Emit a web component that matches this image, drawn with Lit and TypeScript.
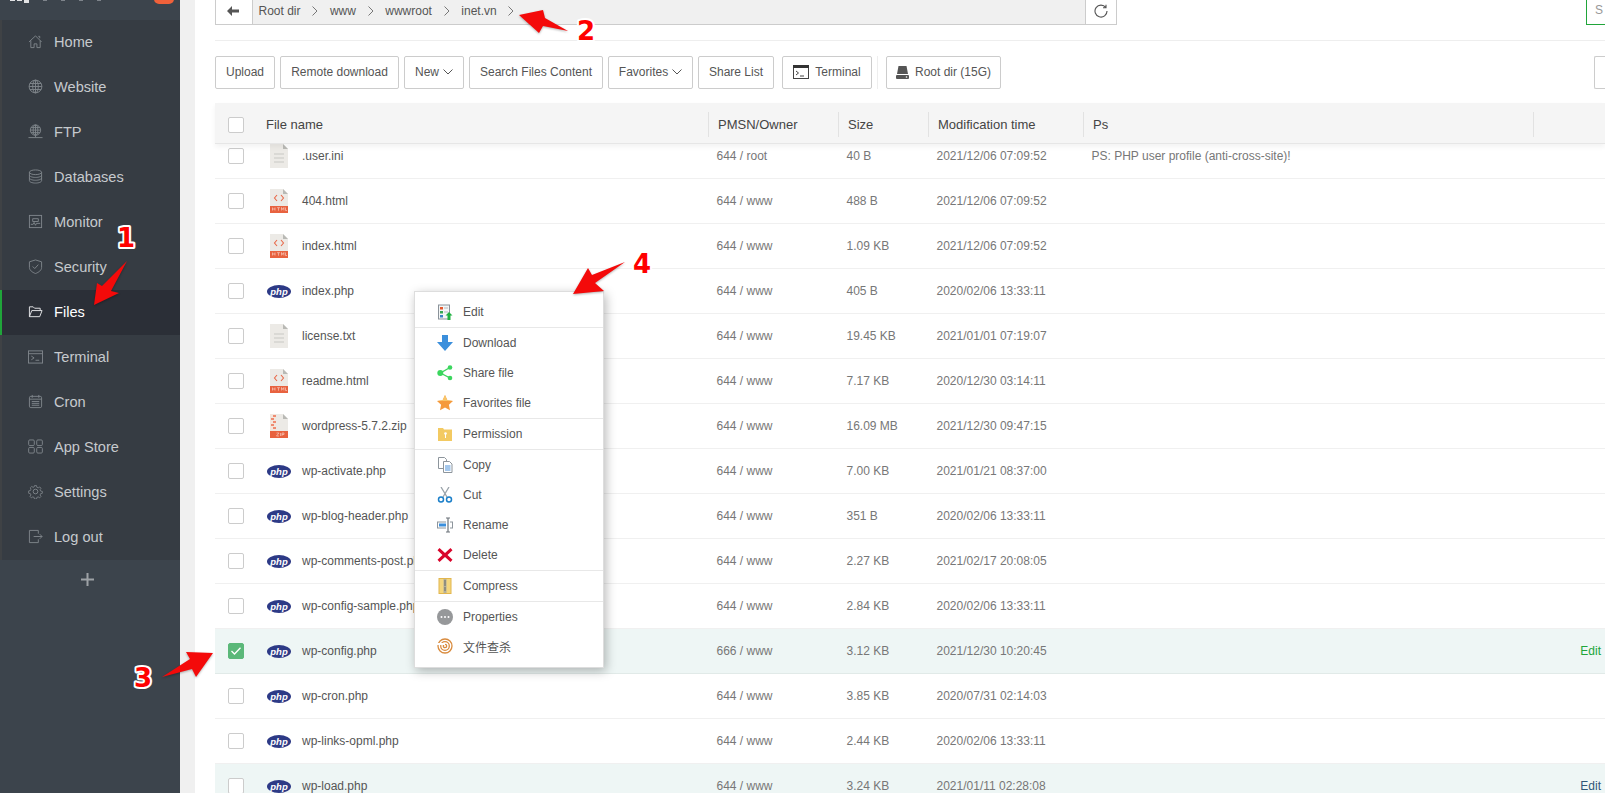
import { LitElement, html, css, svg } from 'lit';
import { customElement } from 'lit/decorators.js';
import { classMap } from 'lit/directives/class-map.js';

type Kind = 'txt' | 'html' | 'php' | 'zip';

interface FileRow {
  name: string;
  kind: Kind;
  perm: string;
  size: string;
  time: string;
  ps?: string;
  checked?: boolean;
  tint?: boolean;
  edit?: 'green' | 'blue';
}

const W = '644 / www';

const FILES: FileRow[] = [
  { name: '.user.ini', kind: 'txt', perm: '644 / root', size: '40 B', time: '2021/12/06 07:09:52', ps: 'PS: PHP user profile (anti-cross-site)!' },
  { name: '404.html', kind: 'html', perm: W, size: '488 B', time: '2021/12/06 07:09:52' },
  { name: 'index.html', kind: 'html', perm: W, size: '1.09 KB', time: '2021/12/06 07:09:52' },
  { name: 'index.php', kind: 'php', perm: W, size: '405 B', time: '2020/02/06 13:33:11' },
  { name: 'license.txt', kind: 'txt', perm: W, size: '19.45 KB', time: '2021/01/01 07:19:07' },
  { name: 'readme.html', kind: 'html', perm: W, size: '7.17 KB', time: '2020/12/30 03:14:11' },
  { name: 'wordpress-5.7.2.zip', kind: 'zip', perm: W, size: '16.09 MB', time: '2021/12/30 09:47:15' },
  { name: 'wp-activate.php', kind: 'php', perm: W, size: '7.00 KB', time: '2021/01/21 08:37:00' },
  { name: 'wp-blog-header.php', kind: 'php', perm: W, size: '351 B', time: '2020/02/06 13:33:11' },
  { name: 'wp-comments-post.php', kind: 'php', perm: W, size: '2.27 KB', time: '2021/02/17 20:08:05' },
  { name: 'wp-config-sample.php', kind: 'php', perm: W, size: '2.84 KB', time: '2020/02/06 13:33:11' },
  { name: 'wp-config.php', kind: 'php', perm: '666 / www', size: '3.12 KB', time: '2021/12/30 10:20:45', checked: true, tint: true, edit: 'green' },
  { name: 'wp-cron.php', kind: 'php', perm: W, size: '3.85 KB', time: '2020/07/31 02:14:03' },
  { name: 'wp-links-opml.php', kind: 'php', perm: W, size: '2.44 KB', time: '2020/02/06 13:33:11' },
  { name: 'wp-load.php', kind: 'php', perm: W, size: '3.24 KB', time: '2021/01/11 02:28:08', tint: true, edit: 'blue' },
];

// sidebar icons, 16x16 outline
const NAV_ICONS: Record<string, unknown> = {
  home: svg`<path d="M1 8.500 8 2l6.500 6.500M3 7v7.500h3.500V10.500h3V14.500H13V7M11 2.500h1.500V4.500"/>`,
  web: svg`<circle cx="8" cy="8" r="6.800"/><ellipse cx="8" cy="8" rx="3" ry="6.800"/><path d="M8 1.200v13.600M1.200 8h13.600M2 4.800h12M2 11.200h12"/>`,
  ftp: svg`<circle cx="8" cy="6.500" r="5.500"/><ellipse cx="8" cy="6.500" rx="2.500" ry="5.500"/><path d="M8 1v11M2.500 6.500h11M3.300 3.800h9.400M3.300 9.200h9.400M8 12v2M.5 14.500h15"/>`,
  db: svg`<ellipse cx="8" cy="3.500" rx="6.500" ry="2.500"/><path d="M1.500 3.500v9c0 1.400 2.900 2.500 6.500 2.500s6.500-1.100 6.500-2.500v-9M1.500 6.500C1.500 7.900 4.400 9 8 9s6.500-1.100 6.500-2.500M1.500 9.500c0 1.400 2.900 2.500 6.500 2.500s6.500-1.100 6.500-2.500"/>`,
  monitor: svg`<rect x="1.500" y="1.500" width="13" height="13"/><path d="M3 11h2.500l1-2 1.500 3 1-2H13M5 5h6v3H5z"/>`,
  shield: svg`<path d="M8 1 14.500 3v6c0 3-3 5.200-6.500 6.500C4.500 14.200 1.500 12 1.500 9V3zM5 8l2.200 2.200L11 6"/>`,
  files: svg`<path d="M1.500 13.500V3h4l1.500 1.500h6V7M1.500 13.500h11L15 7H4z"/>`,
  term: svg`<rect x=".5" y="2" width="15" height="13"/><path d="M.5 5h15M3.500 7.500 6.500 9.500 3.500 11.500M8 12h4"/>`,
  cron: svg`<rect x="1.500" y="2.500" width="13" height="12" rx="1.500"/><path d="M4.500 1v3M11.500 1v3M1.500 5.500h13M4 8h8M4 10h8M4 12h8"/>`,
  apps: svg`<rect x=".7" y="1" width="6" height="6" rx="1.200"/><rect x="9.300" y="1" width="6" height="6" rx="1.200"/><rect x=".7" y="9" width="6" height="6" rx="1.200"/><rect x="9.300" y="9" width="6" height="6" rx="1.200"/>`,
  gear: svg`<circle cx="8" cy="8" r="2.500"/><path d="M6.800 1h2.400l.4 2 1.600.7 1.800-1.100 1.500 1.600-1.100 1.700.7 1.600 2 .4v2.200l-2 .4-.7 1.600 1.100 1.800-1.600 1.600-1.700-1.100-1.600.6-.4 2H6.800l-.4-2-1.600-.6-1.700 1.100-1.600-1.600 1.100-1.800-.7-1.600-2-.4V7.300l2-.4.7-1.600L1.900 3.600l1.600-1.600 1.700 1.100 1.200-.5z" transform="translate(.8 .8) scale(.9)"/>`,
  logout: svg`<path d="M11 5V1.500H1.500v13H11V11M6 8h9M12.500 5.500 15 8l-2.500 2.500"/>`,
};

const NAV = [
  ['Home', 'home'], ['Website', 'web'], ['FTP', 'ftp'], ['Databases', 'db'],
  ['Monitor', 'monitor'], ['Security', 'shield'], ['Files', 'files'], ['Terminal', 'term'],
  ['Cron', 'cron'], ['App Store', 'apps'], ['Settings', 'gear'], ['Log out', 'logout'],
];

const fileIcon = (kind: Kind) => {
  if (kind === 'php') {
    return html`<span class="php">php</span>`;
  }
  const page = svg`<path d="M0 0h13l5 5v19H0z" fill="#eceae6"/><path d="M13 0l5 5h-5z" fill="#b9b9b5"/>`;
  if (kind === 'txt') {
    return html`<svg class="page-ico" viewBox="0 0 18 24">${page}<path d="M4 10h10M4 14h10M4 18h10" stroke="#d4d3cf" stroke-width="1.300"/></svg>`;
  }
  if (kind === 'html') {
    return html`<svg class="page-ico" viewBox="0 0 18 24">${page}
      <path d="M7 6 4.500 9 7 12M11 6l2.500 3L11 12" fill="none" stroke="#e8694a" stroke-width="1.100"/>
      <rect y="17" width="18" height="7" fill="#e8623f"/>
      <path d="M2.500 18.500v3M5 18.500v3M2.500 20h2.500M7 18.700h3M8.500 18.700v3M11.500 21.500v-3l1.200 2 1.200-2v3M15.500 18.500v3h1.500" stroke="#f9d9cf" stroke-width=".6" fill="none"/></svg>`;
  }
  return html`<svg class="page-ico" viewBox="0 0 18 24">${page}
    <path d="M0 0h6v17H0z" fill="#f3e6dd"/>
    <path d="M3 1h3v2H3zM1 4h3v2H1zM3 7h3v2H3zM1 10h3v2H1zM3 13h3v2H3z" fill="#ee8c72"/>
    <rect y="17" width="18" height="7" fill="#e8623f"/>
    <path d="M6.500 19h2.500l-2.500 3H9M10.500 19v3M12 22v-3h2v1.500h-2" stroke="#f9d9cf" stroke-width=".6" fill="none"/></svg>`;
};

const MENU_ICONS: Record<string, unknown> = {
  edit: svg`<rect x="1.500" y="1" width="11" height="14" fill="#f4f6f6" stroke="#8a9299"/><rect x="3" y="3" width="3" height="2.500" fill="#e4572e"/><rect x="3" y="7" width="3" height="2.500" fill="#35a853"/><rect x="3" y="11" width="3" height="2.500" fill="#3b82c4"/><path d="M7 4h4M7 8h4" stroke="#b6bcc1"/><path d="M12 8l3.500 3.500h-2V16h-3v-4.500h-2z" fill="#1fb141"/>`,
  download: svg`<path d="M5 0h6v7h5l-8 9-8-9h5z" fill="#3b8fdc"/>`,
  share: svg`<path d="M13 2.500 3.500 8 13 13" fill="none" stroke="#3bd65e" stroke-width="1.400"/><circle cx="13" cy="2.500" r="2.300" fill="#3bd65e"/><circle cx="3.300" cy="8" r="3" fill="#3bd65e"/><circle cx="13" cy="13" r="2.300" fill="#3bd65e"/>`,
  star: svg`<path d="M8 0l2.400 5.200 5.600.7-4.100 3.800 1.100 5.600L8 12.500l-5 2.800 1.100-5.600L0 5.900l5.600-.7z" fill="#f59a3c"/><path d="M8 0l2.400 5.200 5.600.7H0l5.600-.7z" fill="#f8c56a"/>`,
  perm: svg`<path d="M1 2h5l1 1.500h8V15H1z" fill="#f3ca62"/><circle cx="8.500" cy="7.500" r="1.300" fill="#fff"/><rect x="8" y="8" width="1" height="4" fill="#fff"/>`,
  copy: svg`<path d="M1.500.5h6l2 2v9h-8z" fill="#fff" stroke="#8d959c"/><path d="M6.500 4.500h6l2.500 2.500v8.500H6.500z" fill="#fff" stroke="#8d959c"/><path d="M8 9h5.500M8 11h5.500M8 13h5.500" stroke="#4a90d9"/>`,
  cut: svg`<path d="M4 0l6 10M12 0 6 10" stroke="#9aa3aa" stroke-width="1.300"/><circle cx="4" cy="12.500" r="2.500" fill="none" stroke="#1b7fc9" stroke-width="1.500"/><circle cx="12" cy="12.500" r="2.500" fill="none" stroke="#1b7fc9" stroke-width="1.500"/>`,
  rename: svg`<rect x=".5" y="5" width="15" height="6" fill="none" stroke="#8d959c"/><rect x="2" y="6.500" width="7" height="3" fill="#3b8fdc"/><rect x="9" y="2" width="4" height="12" fill="#fff"/><path d="M9 1h4M11 1v14M9 15h4" stroke="#6c737a" stroke-width="1.200"/>`,
  del: svg`<path d="M2.500 1 8 6l5.500-5L15.500 3.200 10.500 8l5 4.800-2 2.200L8 10l-5.500 5-2-2.200 5-4.800-5-4.800z" fill="#d9062c"/>`,
  zip: svg`<rect x="2" y="0.500" width="12" height="15" fill="#f5d77e" stroke="#e2b64e"/><rect x="6.500" y="1" width="3" height="14" fill="#b4b09e"/><path d="M7 3h2M7 5h2M7 7h2M7 10h2M7 12h2" stroke="#6f6f62"/>`,
  props: svg`<circle cx="8" cy="8" r="8" fill="#96989a"/><circle cx="4.500" cy="8" r="1" fill="#fff"/><circle cx="8" cy="8" r="1" fill="#fff"/><circle cx="11.500" cy="8" r="1" fill="#fff"/>`,
  scan: svg`<g fill="none" stroke="#d98b3e" stroke-width="1.300"><circle cx="8" cy="8" r="7"/><circle cx="8" cy="8" r="4.300"/><circle cx="8" cy="8" r="1.700"/></g><path d="M0 5h8v2H0z" fill="#fff"/>`,
};

const MENU: [string, string, boolean][] = [
  ['Edit', 'edit', true], ['Download', 'download', false], ['Share file', 'share', false],
  ['Favorites file', 'star', true], ['Permission', 'perm', true], ['Copy', 'copy', false],
  ['Cut', 'cut', false], ['Rename', 'rename', false], ['Delete', 'del', true],
  ['Compress', 'zip', true], ['Properties', 'props', false], ['文件查杀', 'scan', false],
];

const chevron = html`<svg class="chev" viewBox="0 0 10 6"><path d="M.5.500 5 5 9.500.500"/></svg>`;

@customElement('app-root')
export class AppRoot extends LitElement {
  static styles = css`
    :host {
      display: block;
      position: relative;
      width: 1605px;
      height: 793px;
      overflow: hidden;
      background: #fff;
      font-family: "Liberation Sans", Arial, sans-serif;
      font-size: 12px;
      color: #555;
    }
    .page { display: flex; height: 100%; }

    /* sidebar */
    .side {
      width: 180px;
      flex: none;
      background: #3c444c;
      padding-top: 20px;
      box-sizing: border-box;
      position: relative;
    }
    .logo { position: absolute; top: 0; left: 10px; display: flex; gap: 2px; opacity: 0.85; }
    .logo i { display: block; width: 5px; height: 1px; background: #fff; }
    .logo b { display: block; width: 4px; height: 1px; margin-left: 12px; background: #8a9096; }
    .badge {
      position: absolute;
      left: 154px;
      top: -14px;
      width: 20px;
      height: 18px;
      border-radius: 5px;
      background: #f0613a;
    }
    .nav { background: #363c43; border-left: 2px solid #3f4245; }
    .nav-item {
      display: flex;
      align-items: center;
      height: 45px;
      box-sizing: border-box;
      padding: 0 0 2px 26px;
      gap: 11px;
      margin-left: -2px;
      border-left: 2px solid transparent;
      font-size: 14.6px;
      color: #c6cace;
    }
    .nav-item svg {
      width: 15px;
      height: 15px;
      fill: none;
      stroke: #7f858b;
      stroke-width: 1;
      flex: none;
    }
    .nav-item.active {
      background: #2b2f37;
      border-left-color: #20a53a;
      color: #fff;
    }
    .nav-item.active svg { stroke: #e6e8ea; }
    .plus {
      display: flex;
      justify-content: center;
      padding: 13px 6px 0 0;
    }
    .plus svg { width: 13px; height: 13px; fill: #9da2a6; }

    .gutter { width: 15px; flex: none; background: #f0f0f0; }

    /* main column */
    .main { flex: 1; min-width: 0; padding-left: 20px; overflow: hidden; }

    .path-row { display: flex; height: 25px; position: relative; }
    .crumbs {
      width: 902px;
      flex: none;
      display: flex;
      box-sizing: border-box;
      border: 1px solid #ccc;
      border-top: 0;
    }
    .back {
      width: 37px;
      flex: none;
      display: flex;
      align-items: center;
      justify-content: center;
      border-right: 1px solid #ccc;
      padding: 0 2px 3px 0;
      box-sizing: border-box;
    }
    .back svg { width: 12px; height: 10px; fill: #555; }
    .path {
      flex: 1;
      background: #f0f0f0;
      display: flex;
      align-items: center;
      padding: 0 5.500px 3px;
      gap: 11.700px;
    }
    .path svg { width: 6px; height: 10px; fill: none; stroke: #777; stroke-width: 1; }
    .refresh {
      width: 30px;
      flex: none;
      display: flex;
      align-items: center;
      justify-content: center;
      border-left: 1px solid #ccc;
      padding-bottom: 3px;
    }
    .refresh svg { width: 14px; height: 14px; fill: none; stroke: #555; stroke-width: 1.100; }
    .search {
      margin-left: auto;
      width: 19px;
      flex: none;
      box-sizing: border-box;
      border: 1px solid #20a53a;
      border-top: 0;
      border-right: 0;
      color: #999;
      padding: 2px 0 0 8px;
      overflow: hidden;
      line-height: 16px;
    }

    .rule { height: 1px; background: #eee; margin-top: 15px; }

    .toolbar { display: flex; align-items: center; gap: 5px; margin-top: 15px; height: 33px; }
    .btn {
      height: 33px;
      box-sizing: border-box;
      padding-bottom: 1px;
      border: 1px solid #ccc;
      border-radius: 2px;
      background: #fff;
      display: flex;
      align-items: center;
      justify-content: center;
      flex: none;
      gap: 4px;
      white-space: nowrap;
      color: #555;
    }
    .chev { width: 10px; height: 6px; fill: none; stroke: #555; stroke-width: 1; }
    .tool-gap { margin-left: 3px; }
    .tool-sep { width: 1px; height: 33px; background: #eee; margin: 0 3px 0 0; flex: none; }
    .btn svg.term { width: 16px; height: 14px; margin-right: 2px; }
    .btn svg.disk { width: 13px; height: 13px; margin-right: 2px; }
    .tail { margin-left: auto; width: 11px; border-right: 0; border-radius: 2px 0 0 2px; }

    /* table */
    .table { margin-top: 14px; }
    .thead {
      position: relative;
      z-index: 1;
      height: 41px;
      padding-top: 3px;
      display: flex;
      align-items: center;
      background: #f5f5f5;
      border-bottom: 1px solid #e6e6e6;
      box-sizing: border-box;
      box-shadow: 0 3px 5px rgba(0, 0, 0, 0.05);
      font-size: 13px;
      color: #444;
    }
    .thead .th {
      height: 25px;
      line-height: 25px;
      box-sizing: border-box;
      border-left: 1px solid #e2e2e2;
      padding-left: 9px;
      flex: none;
    }
    .c-check { width: 51px; flex: none; padding-left: 13px; box-sizing: border-box; }
    .c-name { width: 442px; flex: none; }
    .c-perm { width: 130px; flex: none; }
    .c-size { width: 90px; flex: none; }
    .c-time { width: 155px; flex: none; }
    .c-ps { width: 450px; flex: none; }
    .box {
      display: block;
      width: 16px;
      height: 16px;
      box-sizing: border-box;
      border: 1px solid #ccc;
      border-radius: 2px;
      background: #fff;
    }
    .box.on {
      background: #5bb879;
      border-color: #5bb879;
      display: flex;
      align-items: center;
      justify-content: center;
    }
    .box.on svg { width: 10px; height: 8px; fill: none; stroke: #fff; stroke-width: 1.300; }

    .tbody { margin-top: -10px; }
    .tr {
      height: 45px;
      box-sizing: border-box;
      display: flex;
      align-items: center;
      border-bottom: 1px solid #f0f0f0;
      color: #777;
      position: relative;
    }
    .tr.tint { background: #eef6f5; border-bottom-color: #e1eae8; }
    .cell { padding-left: 8.5px; box-sizing: border-box; white-space: nowrap; overflow: hidden; }
    .fname { display: flex; align-items: center; color: #555; padding-left: 0; }
    .ico { width: 26px; margin-right: 10px; flex: none; display: flex; justify-content: center; }
    .page-ico { width: 18px; height: 24px; display: block; }
    .php {
      display: block;
      width: 24px;
      height: 13px;
      border-radius: 50%;
      background: #2d3a86;
      color: #fff;
      font: italic bold 9.500px/13px "Liberation Sans", Arial, sans-serif;
      text-align: center;
    }
    .edit { position: absolute; right: 4px; top: 15px; line-height: 14px; }
    .edit.green { color: #20a53a; }
    .edit.blue { color: #2f5878; }

    /* context menu over the table */
    .menu {
      position: absolute;
      left: 414px;
      top: 291px;
      z-index: 2;
      width: 190px;
      box-sizing: border-box;
      padding: 5px 0;
      background: #fff;
      border: 1px solid #ddd;
      box-shadow: 2px 3px 10px rgba(0, 0, 0, 0.28);
    }
    .mi {
      height: 30px;
      box-sizing: border-box;
      display: flex;
      align-items: center;
      gap: 10px;
      padding-left: 22px;
      color: #555;
    }
    .mi svg { width: 16px; height: 16px; flex: none; }
    .mi.cjk { font-family: "Liberation Sans", "Noto Sans CJK SC", sans-serif; padding-bottom: 2px; }
    .mi.sep { border-bottom: 1px solid #e8e8e8; height: 31px; }

    /* red annotation arrows */
    .notes { position: absolute; inset: 0; z-index: 3; width: 1605px; height: 793px; pointer-events: none; }
    .notes polygon { fill: #f40a0a; filter: drop-shadow(0 1px 1px rgba(0, 0, 0, 0.3)); }
    .notes text {
      font: bold 26px "DejaVu Sans", sans-serif;
      fill: #f00;
      stroke: #fff;
      stroke-width: 4px;
      paint-order: stroke;
      text-anchor: middle;
      stroke-linejoin: round;
    }
  `;

  private renderRow(f: FileRow) {
    return html`
      <div class=${classMap({ tr: true, tint: !!f.tint })}>
        <div class="c-check">
          ${f.checked
            ? html`<span class="box on"><svg viewBox="0 0 10 8"><path d="M.5 4l3 3L9.500.7"/></svg></span>`
            : html`<span class="box"></span>`}
        </div>
        <div class="cell fname c-name"><span class="ico">${fileIcon(f.kind)}</span>${f.name}</div>
        <div class="cell c-perm">${f.perm}</div>
        <div class="cell c-size">${f.size}</div>
        <div class="cell c-time">${f.time}</div>
        <div class="cell c-ps">${f.ps ?? ''}</div>
        ${f.edit ? html`<span class="edit ${f.edit}">Edit</span>` : ''}
      </div>
    `;
  }

  render() {
    return html`
      <div class="page">
        <aside class="side">
          <div class="logo">
            <i></i><i></i><i style="height:3px"></i><b></b><b></b><b></b><b></b>
          </div>
          <span class="badge"></span>
          <nav class="nav">
            ${NAV.map(([label, icon]) => html`
              <div class=${classMap({ 'nav-item': true, active: label === 'Files' })}>
                <svg viewBox="0 0 16 16">${NAV_ICONS[icon]}</svg>${label}
              </div>
            `)}
          </nav>
          <div class="plus"><svg viewBox="0 0 13 13"><path d="M5.500 0h2v5.500H13v2H7.500V13h-2V7.500H0v-2h5.500z"/></svg></div>
        </aside>
        <div class="gutter"></div>
        <main class="main">
          <div class="path-row">
            <div class="crumbs">
              <div class="back"><svg viewBox="0 0 12 10"><path d="M5 0v3.500h7v3H5V10L0 5z"/></svg></div>
              <div class="path">
                ${['Root dir', 'www', 'wwwroot', 'inet.vn'].map(p => html`
                  <span>${p}</span><svg viewBox="0 0 6 10"><path d="M.5.500 5 5 .5 9.500"/></svg>
                `)}
              </div>
              <div class="refresh"><svg viewBox="0 0 14 14"><path d="M11.800 3.500A6 6 0 1 0 13 7M12 .8v3H9"/></svg></div>
            </div>
            <div class="search">S</div>
          </div>
          <div class="rule"></div>
          <div class="toolbar">
            <div class="btn" style="width:60px">Upload</div>
            <div class="btn" style="width:119px">Remote download</div>
            <div class="btn" style="width:60px">New ${chevron}</div>
            <div class="btn" style="width:134px">Search Files Content</div>
            <div class="btn" style="width:85px">Favorites ${chevron}</div>
            <div class="btn" style="width:76px">Share List</div>
            <div class="btn tool-gap" style="width:90px">
              <svg class="term" viewBox="0 0 16 14"><rect x=".5" y=".5" width="15" height="13" fill="#fff" stroke="#444"/><rect width="16" height="3" fill="#333"/><path d="M3 6l2.500 2L3 10M7 11h4" fill="none" stroke="#444"/></svg>
              Terminal
            </div>
            <span class="tool-sep"></span>
            <div class="btn" style="width:115px">
              <svg class="disk" viewBox="0 0 13 13"><path d="M2.500 0h8L12 8H1z" fill="#555"/><rect x="0" y="9" width="13" height="4" rx="1" fill="#555"/><circle cx="10.500" cy="11" r=".8" fill="#fff"/></svg>
              Root dir (15G)
            </div>
            <div class="btn tail"></div>
          </div>
          <div class="table">
            <div class="thead">
              <div class="c-check"><span class="box"></span></div>
              <div style="width:442px;flex:none">File name</div>
              <div class="th" style="width:130px">PMSN/Owner</div>
              <div class="th" style="width:90px">Size</div>
              <div class="th" style="width:155px">Modification time</div>
              <div class="th" style="width:450px">Ps</div>
              <div class="th" style="width:60px"></div>
            </div>
            <div class="tbody">${FILES.map(f => this.renderRow(f))}</div>
          </div>
        </main>
      </div>

      <div class="menu">
        ${MENU.map(([label, icon, sep]) => html`
          <div class=${classMap({ mi: true, sep, cjk: icon === 'scan' })}>
            <svg viewBox="0 0 16 16">${MENU_ICONS[icon]}</svg>${label}
          </div>
        `)}
      </div>

      <svg class="notes" viewBox="0 0 1605 793">
        <polygon points="127,261 111,291 119,293 94,305 97,283 102,286"/>
        <polygon points="568,31 543,26 539,33 519,15 543,10 545,18"/>
        <polygon points="162,677 192,669 196,677 213,653 186,652 190,659"/>
        <polygon points="625,262 595,283 604,291 573,294 588,268 592,275"/>
        <text x="126" y="247">1</text>
        <text x="586" y="40">2</text>
        <text x="143" y="687">3</text>
        <text x="642" y="273">4</text>
      </svg>
    `;
  }
}
